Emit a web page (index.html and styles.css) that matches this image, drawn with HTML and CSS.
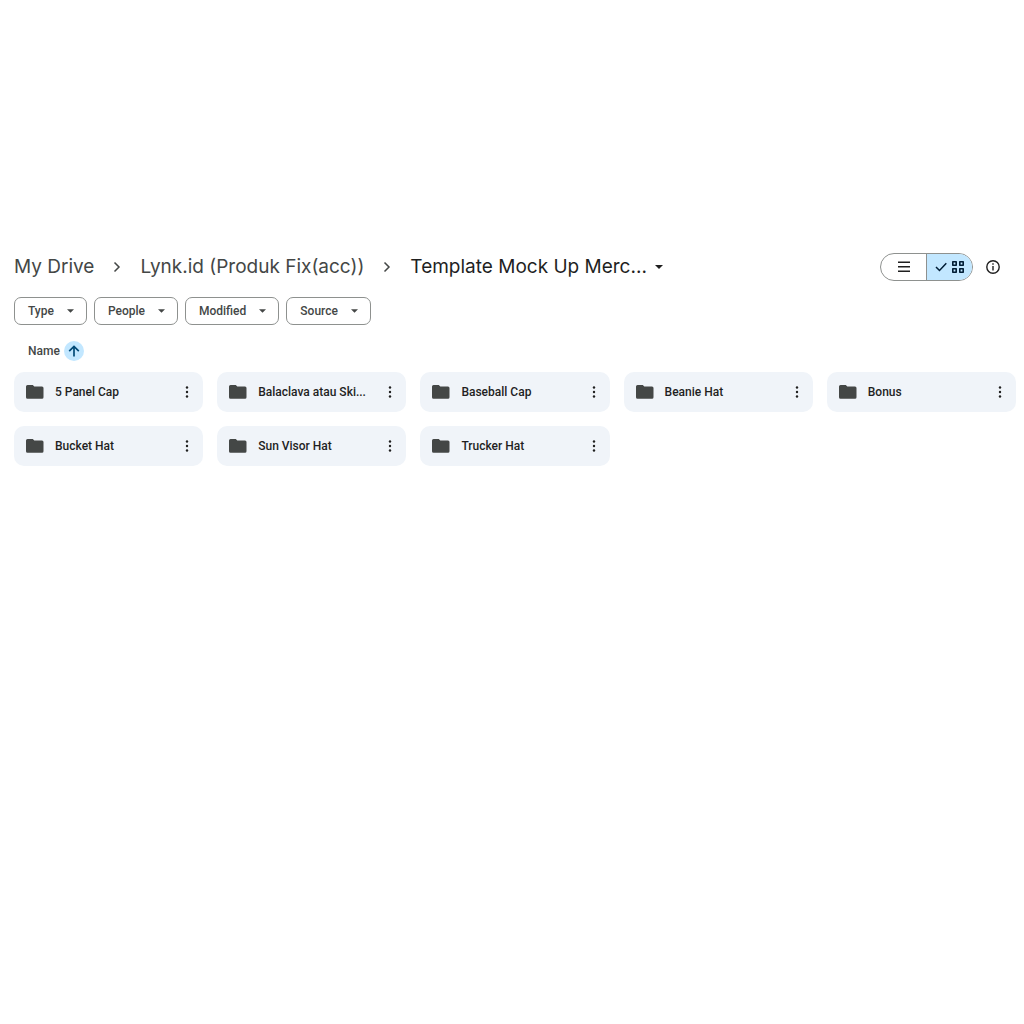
FILE: index.html
```html
<!DOCTYPE html>
<html lang="en">
<head>
<meta charset="utf-8">
<meta name="viewport" content="width=device-width, initial-scale=1">
<title>Template Mock Up Merc... - My Drive</title>
<link rel="stylesheet" href="styles.css">
</head>
<body>
<svg class="sprite" aria-hidden="true">
  <symbol id="chevron" viewBox="0 0 16 16"><path d="M5.500 3.500 10 8l-4.500 4.500" fill="none" stroke="currentColor" stroke-width="1.500"/></symbol>
  <symbol id="caret" viewBox="0 0 8 4"><path d="M0 0h8L4 4z" fill="currentColor"/></symbol>
  <symbol id="folder" viewBox="0 0 18 14"><path d="M1.500 0h5.300l1.500 1.500H16A1.500 1.500 0 0 1 17.500 3v9.300a1.500 1.500 0 0 1-1.500 1.500H1.500A1.500 1.500 0 0 1 0 12.300V1.500A1.500 1.500 0 0 1 1.500 0z" fill="currentColor"/></symbol>
  <symbol id="more" viewBox="0 0 4 12"><g fill="currentColor"><circle cx="2" cy="1.500" r="1.200"/><circle cx="2" cy="6" r="1.200"/><circle cx="2" cy="10.500" r="1.200"/></g></symbol>
</svg>
<main class="drive">
  <header class="topbar">
    <nav class="crumbs" aria-label="Breadcrumb">
      <a class="crumb" href="#">My Drive</a>
      <svg class="chevron"><use href="#chevron"/></svg>
      <a class="crumb" href="#">Lynk.id (Produk Fix(acc))</a>
      <svg class="chevron"><use href="#chevron"/></svg>
      <button class="crumb current" type="button">Template Mock Up Merc...<svg class="caret"><use href="#caret"/></svg></button>
    </nav>
    <div class="tools">
      <div class="switch" role="group" aria-label="Layout">
        <button class="view" type="button" aria-label="List layout" aria-pressed="false">
          <svg width="12" height="12" viewBox="0 0 12 12"><path d="M0 1.300h12M0 5.700h12M0 10.300h12" stroke="currentColor" stroke-width="1.500"/></svg>
        </button>
        <button class="view selected" type="button" aria-label="Grid layout" aria-pressed="true">
          <svg width="12" height="10" viewBox="0 0 12 10"><path d="m1 5 3.500 3.500L11.300 1.300" fill="none" stroke="currentColor" stroke-width="1.500"/></svg>
          <svg width="14" height="14" viewBox="0 0 14 14"><path d="M1.800 1.800h3.400v3.400H1.800zM8.800 1.800h3.400v3.400H8.800zM1.800 8.800h3.400v3.400H1.800zM8.800 8.800h3.400v3.400H8.800z" fill="none" stroke="currentColor" stroke-width="1.600" stroke-linejoin="round"/></svg>
        </button>
      </div>
      <button class="info" type="button" aria-label="View details">
        <svg width="14" height="14" viewBox="0 0 14 14"><circle cx="7" cy="7" r="6.200" fill="none" stroke="currentColor" stroke-width="1.400"/><path d="M7 3.300v1.400M7 6v4.500" stroke="currentColor" stroke-width="1.400"/></svg>
      </button>
    </div>
  </header>
  <div class="filters">
    <button class="chip" type="button">Type<svg class="caret small"><use href="#caret"/></svg></button>
    <button class="chip" type="button">People<svg class="caret small"><use href="#caret"/></svg></button>
    <button class="chip" type="button">Modified<svg class="caret small"><use href="#caret"/></svg></button>
    <button class="chip" type="button">Source<svg class="caret small"><use href="#caret"/></svg></button>
  </div>
  <button class="sort" type="button">Name
    <span class="direction"><svg width="12" height="12" viewBox="0 0 12 12"><path d="M6 11.500V1.500M1.200 6.200 6 1.400l4.800 4.800" fill="none" stroke="currentColor" stroke-width="1.700"/></svg></span>
  </button>
  <ul class="folders">
    <li class="folder"><a class="name" href="#"><svg class="icon"><use href="#folder"/></svg>5 Panel Cap</a><button class="more" type="button" aria-label="More actions for 5 Panel Cap"><svg class="dots"><use href="#more"/></svg></button></li>
    <li class="folder"><a class="name" href="#"><svg class="icon"><use href="#folder"/></svg>Balaclava atau Ski...</a><button class="more" type="button" aria-label="More actions for Balaclava atau Ski..."><svg class="dots"><use href="#more"/></svg></button></li>
    <li class="folder"><a class="name" href="#"><svg class="icon"><use href="#folder"/></svg>Baseball Cap</a><button class="more" type="button" aria-label="More actions for Baseball Cap"><svg class="dots"><use href="#more"/></svg></button></li>
    <li class="folder"><a class="name" href="#"><svg class="icon"><use href="#folder"/></svg>Beanie Hat</a><button class="more" type="button" aria-label="More actions for Beanie Hat"><svg class="dots"><use href="#more"/></svg></button></li>
    <li class="folder"><a class="name" href="#"><svg class="icon"><use href="#folder"/></svg>Bonus</a><button class="more" type="button" aria-label="More actions for Bonus"><svg class="dots"><use href="#more"/></svg></button></li>
    <li class="folder"><a class="name" href="#"><svg class="icon"><use href="#folder"/></svg>Bucket Hat</a><button class="more" type="button" aria-label="More actions for Bucket Hat"><svg class="dots"><use href="#more"/></svg></button></li>
    <li class="folder"><a class="name" href="#"><svg class="icon"><use href="#folder"/></svg>Sun Visor Hat</a><button class="more" type="button" aria-label="More actions for Sun Visor Hat"><svg class="dots"><use href="#more"/></svg></button></li>
    <li class="folder"><a class="name" href="#"><svg class="icon"><use href="#folder"/></svg>Trucker Hat</a><button class="more" type="button" aria-label="More actions for Trucker Hat"><svg class="dots"><use href="#more"/></svg></button></li>
  </ul>
</main>
</body>
</html>
```
FILE: styles.css
```css
* {
  box-sizing: border-box;
}

body {
  margin: 0;
  background: #fff;
  color: #1f1f1f;
  font: 500 12px/20px Roboto, "Liberation Sans", sans-serif;
}

button {
  padding: 0;
  border: 0;
  background: none;
  color: inherit;
  font: inherit;
  cursor: pointer;
}

a {
  color: inherit;
  text-decoration: none;
}

svg {
  display: block;
  flex: none;
}

.sprite {
  display: none;
}

.drive {
  padding: 253px 8px 16px 14px;
}

.topbar,
.crumbs,
.tools,
.filters,
.sort,
.folder,
.name {
  display: flex;
  align-items: center;
}

.topbar {
  justify-content: space-between;
}

.crumbs {
  gap: 15px;
  color: #444746;
}

.crumb {
  font: 400 19px/28px Inter, Roboto, sans-serif;
  white-space: nowrap;
}

.current {
  display: flex;
  align-items: center;
  gap: 8px;
  color: #1f1f1f;
}

.chevron {
  width: 16px;
  height: 16px;
}

.caret {
  width: 8px;
  height: 4px;
}

.small {
  width: 7px;
}

.tools {
  gap: 13px;
  padding-right: 16px;
}

.switch {
  display: flex;
  height: 28px;
  border: 1px solid #8e918f;
  border-radius: 14px;
  overflow: hidden;
}

.view {
  display: flex;
  align-items: center;
  justify-content: center;
  gap: 4px;
  width: 45px;
}

.selected {
  width: 46px;
  border-left: 1px solid #8e918f;
  background: #c2e7ff;
  color: #001d35;
}

.filters {
  gap: 7px;
  margin-top: 16px;
  color: #444746;
}

.chip {
  display: flex;
  align-items: center;
  gap: 13px;
  height: 28px;
  padding: 0 12px 0 13px;
  border: 1px solid #8e918f;
  border-radius: 7px;
}

.sort {
  gap: 4px;
  margin: 16px 0 11px 14px;
  color: #444746;
}

.direction {
  display: grid;
  place-items: center;
  width: 20px;
  height: 20px;
  border-radius: 50%;
  background: #c2e7ff;
  color: #004a77;
}

.folders {
  display: grid;
  grid-template-columns: repeat(5, minmax(0, 1fr));
  gap: 14px;
  margin: 0;
  padding: 0;
  list-style: none;
}

.folder {
  height: 40px;
  padding: 0 9px 0 12px;
  border-radius: 10px;
  background: #f0f4f9;
}

.name {
  flex: 1;
  gap: 11px;
  min-width: 0;
  white-space: nowrap;
}

.icon {
  width: 18px;
  height: 14px;
  color: #444746;
}

.more {
  display: grid;
  place-items: center;
  width: 14px;
  height: 24px;
}

.dots {
  width: 4px;
  height: 12px;
}
```
